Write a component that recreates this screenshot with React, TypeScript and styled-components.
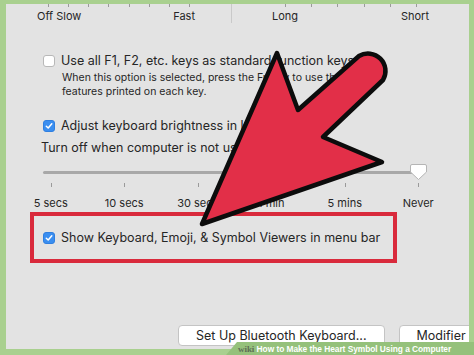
import styled, { createGlobalStyle } from "styled-components";

const Global = createGlobalStyle`
  html, body { margin: 0; padding: 0; }
  body { width: 474px; height: 355px; overflow: hidden; background: #a9d08f; }
`;

const Frame = styled.div`
  position: relative;
  width: 474px;
  height: 355px;
  box-sizing: border-box;
  padding: 4px 5px 6px 6px;
  background: #a9d08f;
  font-family: Inter, Roboto, "Liberation Sans", sans-serif;
  color: #262626;
  overflow: hidden;
`;

const Panel = styled.div`
  height: 100%;
  background: #e3e3e3;
  display: flex;
  flex-direction: column;
  overflow: hidden;
`;

const TopRow = styled.div`
  display: grid;
  grid-template-columns: 225px 1fr;
  height: 19px;
`;

const Half = styled.div<{ $divider?: boolean; $pl: number; $pr: number }>`
  border-left: ${(p) => (p.$divider ? "1px solid #c9c9c9" : "none")};
  padding: 0 ${(p) => p.$pr}px 0 ${(p) => p.$pl}px;
  display: flex;
  flex-direction: column;
`;

const Ticks = styled.div<{ $pl: number; $pr: number }>`
  display: flex;
  justify-content: space-between;
  height: 4px;
  padding: 0 ${(p) => p.$pr}px 0 ${(p) => p.$pl}px;
  span {
    width: 1px;
    height: 3px;
    background: #9a9a9a;
  }
`;

const TopLabels = styled.div`
  display: flex;
  justify-content: space-between;
  font-size: 11px;
  line-height: 14px;
  margin-top: 1px;
`;

const Row = styled.label<{ $mt: number; $pl?: number }>`
  display: flex;
  align-items: center;
  gap: 6px;
  margin-top: ${(p) => p.$mt}px;
  padding-left: ${(p) => p.$pl ?? 37}px;
  font-size: 12.5px;
  line-height: 16px;
  white-space: nowrap;
`;

const Box = styled.span<{ $on?: boolean }>`
  flex: none;
  width: 12px;
  height: 12px;
  border-radius: 3px;
  box-sizing: border-box;
  background: ${(p) => (p.$on ? "#3a8ef0" : "#fff")};
  border: 1px solid ${(p) => (p.$on ? "#2f7fe0" : "#b8b8b8")};
  display: flex;
  align-items: center;
  justify-content: center;
`;

const Hint = styled.div`
  padding-left: 56px;
  margin-top: 2px;
  font-size: 10.5px;
  line-height: 14px;
  white-space: nowrap;
`;

const Plain = styled.div<{ $mt: number }>`
  padding-left: 35px;
  margin-top: ${(p) => p.$mt}px;
  font-size: 12.5px;
  line-height: 16px;
  white-space: nowrap;
`;

const Slider = styled.div`
  margin: 6px 0 0 37px;
  width: 384px;
  height: 20px;
  display: flex;
  align-items: center;
  position: relative;
`;

const Track = styled.div`
  width: 375px;
  height: 3px;
  border-radius: 2px;
  background: #a8a8a8;
`;

const Thumb = styled.svg`
  position: absolute;
  left: 366px;
  top: 1px;
`;

const ScaleTicks = styled.div`
  display: flex;
  justify-content: space-between;
  margin: 1px 0 0 45px;
  width: 368px;
  span {
    width: 1px;
    height: 4px;
    background: #9a9a9a;
  }
`;

const ScaleLabels = styled.div`
  display: grid;
  grid-template-columns: repeat(6, 73.5px);
  margin: 9px 0 0 8px;
  font-size: 11px;
  line-height: 14px;
  span {
    text-align: center;
    white-space: nowrap;
  }
`;

const Highlight = styled.div`
  margin: 2px 0 0 24px;
  width: 367px;
  height: 51px;
  box-sizing: border-box;
  border: 4px solid #d92a3c;
  display: flex;
  align-items: center;
`;

const Buttons = styled.div`
  display: flex;
  gap: 14px;
  margin: 62px 0 0 172px;
`;

const Button = styled.div`
  flex: none;
  height: 21px;
  padding: 0 17px;
  box-sizing: border-box;
  background: #fff;
  border: 1px solid #c4c4c4;
  border-radius: 4px;
  font-size: 12.5px;
  line-height: 19px;
  white-space: nowrap;
`;

const Overlay = styled.svg`
  position: absolute;
  inset: 0;
  pointer-events: none;
`;

const Banner = styled.div`
  position: absolute;
  right: 0;
  bottom: 0;
  height: 13px;
  width: 248px;
  background: #95c17b;
  clip-path: polygon(11px 0, 100% 0, 100% 100%, 0 100%);
  display: flex;
  align-items: center;
  padding-left: 12px;
  box-sizing: border-box;
  font-family: "Liberation Sans", Arial, sans-serif;
  font-weight: bold;
  font-size: 8.4px;
  letter-spacing: -0.05px;
  color: #fff;
  white-space: nowrap;
  b {
    font-family: "Liberation Serif", serif;
    color: #5d6d55;
    font-size: 9px;
  }
`;

const Check = () => (
  <svg width="8" height="8" viewBox="0 0 8 8">
    <path d="M1.3 4.2 L3.2 6 L6.8 1.8" fill="none" stroke="#fff" strokeWidth="1.5" strokeLinecap="round" strokeLinejoin="round" />
  </svg>
);

export default function App() {
  const scale = ["5 secs", "10 secs", "30 secs", "1 min", "5 mins", "Never"];

  return (
    <>
      <Global />
      <Frame>
        <Panel>
          <TopRow>
            <Half $pl={31} $pr={36}>
              <Ticks $pl={11} $pr={5}>
                {[0, 1, 2, 3, 4, 5, 6, 7].map((i) => <span key={i} />)}
              </Ticks>
              <TopLabels>
                <span>Off Slow</span>
                <span>Fast</span>
              </TopLabels>
            </Half>
            <Half $divider $pl={40} $pr={40}>
              <Ticks $pl={13} $pr={12}>
                {[0, 1, 2, 3, 4, 5].map((i) => <span key={i} />)}
              </Ticks>
              <TopLabels>
                <span>Long</span>
                <span>Short</span>
              </TopLabels>
            </Half>
          </TopRow>

          <Row $mt={30}>
            <Box />
            Use all F1, F2, etc. keys as standard function keys
          </Row>
          <Hint>
            When this option is selected, press the Fn key to use the special
            <br />
            features printed on each key.
          </Hint>

          <Row $mt={19}>
            <Box $on>
              <Check />
            </Box>
            Adjust keyboard brightness in low light
          </Row>
          <Plain $mt={6}>Turn off when computer is not used for:</Plain>

          <Slider>
            <Track />
            <Thumb width="19" height="19" viewBox="0 0 19 19">
              <path d="M3 1.5 H16 a1.5 1.5 0 0 1 1.5 1.5 V9 L9.5 16.5 L1.5 9 V3 a1.5 1.5 0 0 1 1.5 -1.5 Z" fill="#fff" stroke="#b5b5b5" strokeWidth="1" />
            </Thumb>
          </Slider>
          <ScaleTicks>
            {scale.map((s) => <span key={s} />)}
          </ScaleTicks>
          <ScaleLabels>
            {scale.map((s) => <span key={s}>{s}</span>)}
          </ScaleLabels>

          <Highlight>
            <Row $mt={0} $pl={9}>
              <Box $on>
                <Check />
              </Box>
              Show Keyboard, Emoji, &amp; Symbol Viewers in menu bar
            </Row>
          </Highlight>

          <Buttons>
            <Button>Set Up Bluetooth Keyboard...</Button>
            <Button>Modifier Keys...</Button>
          </Buttons>
        </Panel>

        <Overlay width="474" height="355" viewBox="0 0 474 355">
          <path
            d="M202 224 L277 53 L298 110 L359 56 A17.5 17.5 0 0 1 383 80 L323 137 L382 162 Z"
            fill="#e22f48"
            stroke="#0c0c0c"
            strokeWidth="4.5"
            strokeLinejoin="round"
          />
        </Overlay>

        <Banner>
          <b>wiki</b>&nbsp;How to Make the Heart Symbol Using a Computer
        </Banner>
      </Frame>
    </>
  );
}
